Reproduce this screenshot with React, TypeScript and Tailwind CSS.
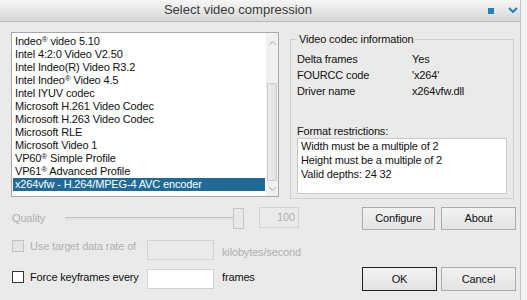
import React from 'react';

const codecs = [
  'Indeo® video 5.10',
  'Intel 4:2:0 Video V2.50',
  'Intel Indeo(R) Video R3.2',
  'Intel Indeo® Video 4.5',
  'Intel IYUV codec',
  'Microsoft H.261 Video Codec',
  'Microsoft H.263 Video Codec',
  'Microsoft RLE',
  'Microsoft Video 1',
  'VP60® Simple Profile',
  'VP61® Advanced Profile',
  'x264vfw - H.264/MPEG-4 AVC encoder',
];

// the ® sits raised and small in the old dialog font
function CodecName({ name }: { name: string }) {
  const parts = name.split('®');
  if (parts.length === 1) return <>{name}</>;
  return (
    <>
      {parts[0]}
      <span className="text-[8px] align-[3px] leading-none">®</span>
      {parts[1]}
    </>
  );
}

function Chevron({ up }: { up?: boolean }) {
  return (
    <svg width="7" height="4" viewBox="0 0 7 4">
      <polyline
        points={up ? '0.5,3.5 3.5,0.5 6.5,3.5' : '0.5,0.5 3.5,3.5 6.5,0.5'}
        fill="none"
        stroke="#a3a3a3"
        strokeWidth="1"
      />
    </svg>
  );
}

function Button({ label, w, isDefault }: { label: string; w: string; isDefault?: boolean }) {
  return (
    <button
      className={`${w} h-full flex items-center justify-center text-[#111] bg-gradient-to-b from-[#f2f2f2] to-[#e3e3e3] border ${
        isDefault ? 'border-[#222]' : 'border-[#adadad]'
      }`}
    >
      {label}
    </button>
  );
}

export default function App() {
  return (
    <div className="w-[527px] h-[300px] bg-[#f2f2f2] flex font-['Liberation_Sans',Arial,sans-serif] text-[11px] tracking-[-0.15px] text-[#111] overflow-hidden">
      <div className="w-[521px] h-full border-r border-[#c4c4c4] bg-[#eaeaea] flex flex-col">
        {/* title bar */}
        <div className="h-[22px] shrink-0 flex bg-gradient-to-b from-[#f6f6f6] to-[#d7d7d7] border-b border-[#bababa]">
          <div className="flex-1 flex items-center justify-center text-[13px] tracking-normal text-[#3a3a3a] pb-[1px]">
            Select video compression
          </div>
          <div className="w-[44px] flex items-start pt-[7px]">
            <div className="ml-[12px] mt-[1px] w-[6px] h-[6px] bg-[#1b87b8]" />
            <svg className="ml-[14px]" width="10" height="6" viewBox="0 0 10 6">
              <polyline points="1,1 5,5 9,1" fill="none" stroke="#1b87b8" strokeWidth="2" />
            </svg>
          </div>
        </div>

        <div className="flex-1 flex flex-col pl-[11px] pr-[4px] pt-[10px]">
          {/* top: codec list + info group */}
          <div className="flex h-[167px] shrink-0">
            <div className="w-[268px] h-[165px] border border-[#a9a9a9] bg-white flex">
              <div className="flex-1 px-[1px] pt-[2px]">
                {codecs.map((c, i) => {
                  const sel = i === codecs.length - 1;
                  return (
                    <div
                      key={c}
                      className={`h-[13px] leading-[13px] pl-[2px] whitespace-nowrap ${
                        sel ? 'bg-[#1f6a97] text-white' : 'text-[#111]'
                      }`}
                    >
                      <CodecName name={c} />
                    </div>
                  );
                })}
              </div>
              <div className="w-[12px] bg-[#f0f0f0] flex flex-col">
                <div className="h-[17px] flex items-center justify-center pt-[2px]">
                  <Chevron up />
                </div>
                <div className="h-[33px]" />
                <div className="h-[98px] mx-[1px] border border-[#cfcfcf] bg-gradient-to-r from-[#ececec] to-[#e0e0e0]" />
                <div className="flex-1 flex items-center justify-center">
                  <Chevron />
                </div>
              </div>
            </div>

            <fieldset className="ml-[11px] mt-[1px] w-[224px] h-[166px] border border-[#d0d0d0] px-[6px]">
              <legend className="px-[2px] leading-[13px] text-[#111]">Video codec information</legend>
              <div className="mt-[5px]">
                {[
                  ['Delta frames', 'Yes'],
                  ['FOURCC code', "'x264'"],
                  ['Driver name', 'x264vfw.dll'],
                ].map(([k, v]) => (
                  <div key={k} className="flex h-[16px] leading-[16px]">
                    <div className="w-[115px]">{k}</div>
                    <div>{v}</div>
                  </div>
                ))}
              </div>
              <div className="mt-[27px] leading-[10px]">Format restrictions:</div>
              <div className="mt-[2px] w-[210px] h-[56px] bg-white border border-[#c9c9c9] pl-[3px] leading-[14px]">
                <div>Width must be a multiple of 2</div>
                <div>Height must be a multiple of 2</div>
                <div>Valid depths: 24 32</div>
              </div>
            </fieldset>
          </div>

          {/* quality row */}
          <div className="flex mt-[8px] h-[23px] shrink-0">
            <div className="w-[54px] pl-[1px] leading-[23px] text-[#b0b0b0]">Quality</div>
            <div className="relative w-[179px] h-[21px] mt-[1px] flex items-center">
              <div className="w-full h-[3px] border-t border-[#c2c2c2] bg-[#e2e2e2]" />
              <div className="absolute right-0 top-0 w-[11px] h-[21px] border border-[#c6c6c6] bg-[#e8e8e8]" />
            </div>
            <div className="ml-[15px] w-[40px] h-[21px] border border-[#d3d3d3] text-right pr-[3px] leading-[19px] text-[#b0b0b0]">
              100
            </div>
            <div className="ml-auto flex h-full">
              <Button label="Configure" w="w-[73px]" />
              <div className="w-[6px]" />
              <Button label="About" w="w-[75px]" />
            </div>
          </div>

          {/* data rate row (disabled) */}
          <div className="flex mt-[10px] h-[20px] shrink-0">
            <div className="ml-[1px] w-[12px] h-[12px] border border-[#c2c2c2] bg-[#e4e4e4]" />
            <div className="ml-[6px] w-[117px] leading-[12px] text-[#b0b0b0]">Use target data rate of</div>
            <div className="w-[67px] h-[20px] border border-[#d3d3d3]" />
            <div className="ml-[8px] mt-[6px] leading-[13px] text-[#b0b0b0]">kilobytes/second</div>
          </div>

          {/* keyframes row */}
          <div className="flex mt-[7px] h-[24px] shrink-0">
            <div className="ml-[1px] mt-[4px] w-[12px] h-[12px] border border-[#333] bg-white" />
            <div className="ml-[6px] mt-[4px] w-[117px] leading-[13px]">Force keyframes every</div>
            <div className="mt-[2px] w-[67px] h-[20px] border border-[#d3d3d3] bg-white" />
            <div className="ml-[8px] mt-[4px] leading-[13px]">frames</div>
            <div className="ml-auto flex h-full">
              <Button label="OK" w="w-[75px]" isDefault />
              <div className="w-[4px]" />
              <Button label="Cancel" w="w-[75px]" />
            </div>
          </div>
        </div>
      </div>
    </div>
  );
}
